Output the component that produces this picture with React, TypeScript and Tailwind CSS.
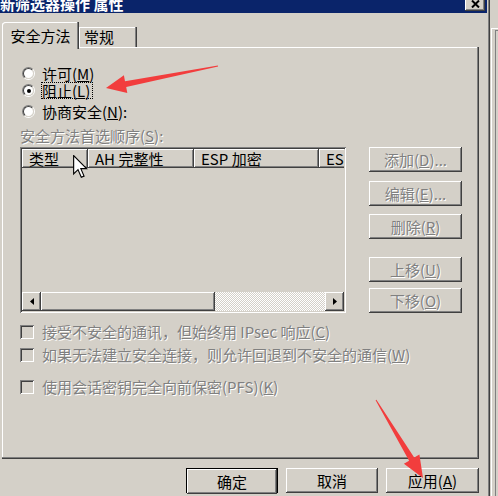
import React from "react";

const raised =
  "shadow-[inset_-1px_-1px_#404040,inset_1px_1px_#ffffff,inset_-2px_-2px_#808080,inset_2px_2px_#d4d0c8]";
const sunken =
  "shadow-[inset_1px_1px_#808080,inset_-1px_-1px_#ffffff,inset_2px_2px_#404040,inset_-2px_-2px_#d4d0c8]";
const dim = "text-[#808080] [text-shadow:1px_1px_0_#ffffff]";

function Key({ k }: { k: string }) {
  return (
    <>
      (<u>{k}</u>)
    </>
  );
}

function Radio({ checked }: { checked?: boolean }) {
  return (
    <span className="flex h-[13px] w-[13px] shrink-0 items-center justify-center rounded-full border border-b-white border-l-[#808080] border-r-white border-t-[#808080]">
      <span className="flex h-[11px] w-[11px] items-center justify-center rounded-full border border-b-[#d4d0c8] border-l-[#404040] border-r-[#d4d0c8] border-t-[#404040] bg-white">
        {checked && <span className="h-[4px] w-[4px] rounded-full bg-black" />}
      </span>
    </span>
  );
}

function Check() {
  return <span className={`h-[14px] w-[14px] shrink-0 bg-[#d4d0c8] ${sunken}`} />;
}

function Btn({
  children,
  disabled,
  className = "",
}: {
  children: React.ReactNode;
  disabled?: boolean;
  className?: string;
}) {
  return (
    <div
      className={`flex h-[25px] items-center justify-center whitespace-pre bg-[#d4d0c8] ${raised} ${
        disabled ? dim : "text-black"
      } ${className}`}
    >
      {children}
    </div>
  );
}

function HeadCell({ children, w }: { children: React.ReactNode; w: string }) {
  return (
    <div
      className={`flex h-full shrink-0 items-center whitespace-pre pl-[7px] ${w} shadow-[inset_-1px_-1px_#404040,inset_1px_1px_#ffffff,inset_-2px_-2px_#808080]`}
    >
      {children}
    </div>
  );
}

export default function App() {
  return (
    <div className="relative flex h-[496px] w-[498px] overflow-hidden bg-[#d4d0c8] font-['Noto_Sans_CJK_SC',sans-serif] text-[15px] leading-[17px] text-black">
      <div className="flex w-[487px] flex-col">
        {/* title bar */}
        <div className="flex h-[13px] items-start overflow-hidden bg-[#0a246a] pr-[2px]">
          <span className="-mt-[5px] whitespace-pre font-bold text-white">新筛选器操作 属性</span>
          <div className={`-mt-[3px] ml-auto flex h-[14px] w-[20px] items-center justify-center bg-[#d4d0c8] ${raised}`}>
            <svg width="9" height="8" viewBox="0 0 9 8">
              <path d="M1 0.5 L8 7.5 M8 0.5 L1 7.5" stroke="#000" strokeWidth="2" />
            </svg>
          </div>
        </div>

        <div className="flex flex-col pl-[2px] pt-[9px]">
          {/* tabs */}
          <div className="relative z-10 flex h-[25px] items-end">
            <div className="-mb-[2px] flex h-[27px] w-[77px] justify-center rounded-tl-[3px] bg-[#d4d0c8] pt-[5px] shadow-[inset_-1px_0_#404040,inset_-2px_0_#808080,inset_1px_1px_#ffffff]">
              安全方法
            </div>
            <div className="flex h-[20px] w-[58px] pl-[5px] pt-[1px] shadow-[inset_-1px_0_#404040,inset_-2px_0_#808080,inset_1px_1px_#ffffff]">
              常规
            </div>
          </div>

          {/* tab panel */}
          <div className="flex h-[412px] w-[477px] flex-col pl-[18px] pt-[18px] shadow-[inset_-1px_-1px_#404040,inset_-2px_-2px_#808080,inset_1px_1px_#ffffff]">
            <div className="flex h-[17px] items-center gap-[7px] pl-[2px]">
              <Radio />
              <span>
                许可<Key k="M" />
              </span>
            </div>
            <div className="flex h-[17px] items-center gap-[6px] pl-[2px]">
              <Radio checked />
              <span className="border border-dotted border-black pr-[2px] leading-[15px]">
                阻止<Key k="L" />
              </span>
            </div>
            <div className="mt-[4px] flex h-[17px] items-center gap-[7px] pl-[2px]">
              <Radio />
              <span>
                协商安全<Key k="N" />:
              </span>
            </div>
            <div className={`mt-[7px] h-[17px] ${dim}`}>
              安全方法首选顺序<Key k="S" />:
            </div>

            <div className="mt-[3px] flex gap-[23px]">
              {/* list */}
              <div className={`flex h-[166px] w-[326px] flex-col p-[2px] ${sunken}`}>
                <div className="flex h-[19px] overflow-hidden">
                  <HeadCell w="w-[66px]">类型</HeadCell>
                  <HeadCell w="w-[106px]">AH 完整性</HeadCell>
                  <HeadCell w="w-[125px]">ESP 加密</HeadCell>
                  <HeadCell w="w-[90px]">ESP 完整性</HeadCell>
                </div>
                <div className="flex-1" />
                <div className="flex h-[19px]">
                  <div className={`flex w-[19px] items-center justify-center bg-[#d4d0c8] ${raised}`}>
                    <svg width="4" height="7" viewBox="0 0 4 7">
                      <path d="M4 0 L0 3.5 L4 7 Z" fill="#000" />
                    </svg>
                  </div>
                  <div className={`w-[174px] bg-[#d4d0c8] ${raised}`} />
                  <div className="flex-1 bg-[repeating-conic-gradient(#ffffff_0%_25%,#d4d0c8_0%_50%)] bg-[length:2px_2px]" />
                  <div className={`flex w-[19px] items-center justify-center bg-[#d4d0c8] ${raised}`}>
                    <svg width="4" height="7" viewBox="0 0 4 7">
                      <path d="M0 0 L4 3.5 L0 7 Z" fill="#000" />
                    </svg>
                  </div>
                </div>
              </div>

              {/* side buttons */}
              <div className="flex w-[93px] flex-col">
                <Btn disabled>
                  添加<Key k="D" />...
                </Btn>
                <Btn disabled className="mt-[9px]">
                  编辑<Key k="E" />...
                </Btn>
                <Btn disabled className="mt-[8px]">
                  删除<Key k="R" />
                </Btn>
                <Btn disabled className="mt-[18px]">
                  上移<Key k="U" />
                </Btn>
                <Btn disabled className="mt-[6px]">
                  下移<Key k="O" />
                </Btn>
              </div>
            </div>

            <div className="mt-[10px] flex h-[17px] items-center gap-[8px]">
              <Check />
              <span className={`whitespace-pre ${dim}`}>
                接受不安全的通讯，但始终用 IPsec 响应<Key k="C" />
              </span>
            </div>
            <div className="mt-[6px] flex h-[17px] items-center gap-[8px]">
              <Check />
              <span className={`whitespace-pre ${dim}`}>
                如果无法建立安全连接，则允许回退到不安全的通信<Key k="W" />
              </span>
            </div>
            <div className="mt-[15px] flex h-[17px] items-center gap-[8px]">
              <Check />
              <span className={`whitespace-pre ${dim}`}>
                使用会话密钥完全向前保密(PFS)<Key k="K" />
              </span>
            </div>
          </div>

          {/* dialog buttons */}
          <div className="flex w-[477px] justify-end gap-[8px] pt-[9px]">
            <div className="h-[25px] w-[92px] border border-black">
              <Btn className="h-[23px]">确定</Btn>
            </div>
            <Btn className="w-[92px]">取消</Btn>
            <Btn className="w-[93px]">
              应用<Key k="A" />
            </Btn>
          </div>
        </div>
      </div>

      {/* window edge and the window behind */}
      <div className="w-[1px] bg-[#d4d0c8]" />
      <div className="w-[1px] bg-[#808080]" />
      <div className="w-[1px] bg-[#404040]" />
      <div className="flex w-[8px] flex-col pl-[1px] pt-[28px]">
        <div className="flex flex-1 border-l border-t border-white pl-[3px] pt-[1px]">
          <div className="flex-1 border-l border-t border-[#808080]" />
        </div>
      </div>

      {/* mouse pointer */}
      <svg className="pointer-events-none absolute left-[73px] top-[155px]" width="15" height="24" viewBox="0 0 13 21">
        <path d="M0.5 0.5 L0.5 16.5 L4.3 12.8 L7.2 19.5 L9.6 18.5 L6.8 11.9 L11.8 11.9 Z" fill="#fff" stroke="#000" strokeWidth="1" />
      </svg>

      {/* red callout arrows */}
      <svg className="pointer-events-none absolute left-0 top-0" width="498" height="496" viewBox="0 0 498 496">
        <polygon
          points="217.9,65.5 125,81.2 123.9,75.3 106,88 127.3,92.9 126.2,87 218.1,66.5"
          fill="#f23d3d"
        />
        <polygon
          points="376.4,399.7 414.2,457.6 419.4,454.5 423,478 403.9,463.8 409.1,460.7 375.6,400.3"
          fill="#f23d3d"
        />
      </svg>
    </div>
  );
}
